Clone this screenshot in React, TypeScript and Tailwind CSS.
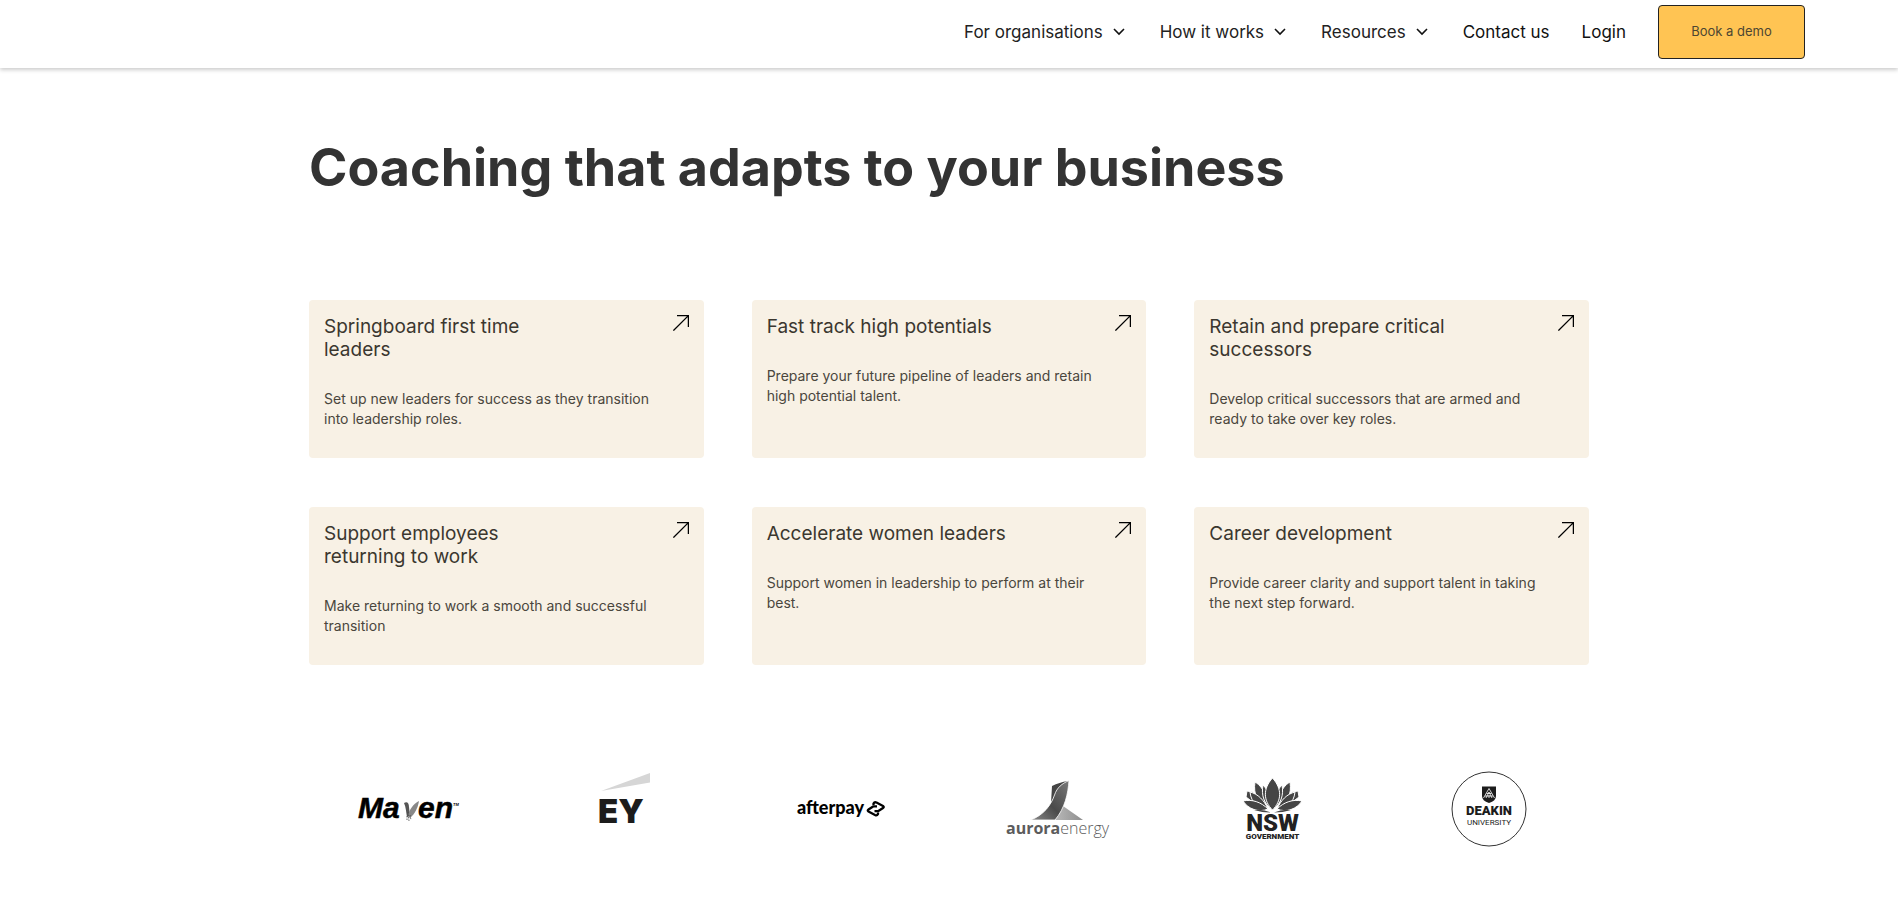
import type { ReactNode } from 'react';

const navItems = [
  { label: 'For organisations', hasMenu: true },
  { label: 'How it works', hasMenu: true },
  { label: 'Resources', hasMenu: true },
  { label: 'Contact us', hasMenu: false },
  { label: 'Login', hasMenu: false },
];

const programs = [
  {
    title: 'Springboard first time leaders',
    description: 'Set up new leaders for success as they transition into leadership roles.',
  },
  {
    title: 'Fast track high potentials',
    description: 'Prepare your future pipeline of leaders and retain high potential talent.',
  },
  {
    title: 'Retain and prepare critical successors',
    description: 'Develop critical successors that are armed and ready to take over key roles.',
  },
  {
    title: 'Support employees returning to work',
    description: 'Make returning to work a smooth and successful transition',
  },
  {
    title: 'Accelerate women leaders',
    description: 'Support women in leadership to perform at their best.',
  },
  {
    title: 'Career development',
    description: 'Provide career clarity and support talent in taking the next step forward.',
  },
];

function ChevronIcon() {
  return (
    <svg width="12" height="8" viewBox="0 0 12 8" fill="none" aria-hidden="true">
      <path d="M1 1l5 5 5-5" stroke="#111" strokeWidth="1.6" />
    </svg>
  );
}

function ArrowIcon() {
  return (
    <svg className="shrink-0" width="16" height="16" viewBox="0 0 16 16" fill="none" aria-hidden="true">
      <path d="M4 .6h11.4V12M15.4 .6L.4 15.6" stroke="#000" strokeWidth="1.3" />
    </svg>
  );
}

function MavenLogo() {
  return (
    <svg width="110" height="34" viewBox="-4 -3 110 34" role="img" aria-label="Maven">
      <g
        fontFamily="'Liberation Sans', Arial, sans-serif"
        fontWeight="700"
        fontStyle="italic"
        stroke="#000"
        strokeWidth=".5"
      >
        <text x="0" y="23" fontSize="30">Ma</text>
        <text x="60" y="23" fontSize="30">en</text>
        <text x="95" y="11" fontSize="4" stroke="none">TM</text>
      </g>
      <path d="M46 8c3-2 5 0 5 4l1 9-3 1c-1-5-1-10-3-14z" fill="#555" />
      <path d="M61 6c-1 6-4 13-9 17l-2-2c1-6 5-12 11-15z" fill="#888" />
      <path d="M50 17l1 9M52 20l1 5M49 21v4" stroke="#444" strokeWidth=".8" strokeDasharray="1.5 1" />
    </svg>
  );
}

function EyLogo() {
  return (
    <svg width="60" height="72" viewBox="-4 0 60 72" role="img" aria-label="EY">
      <path d="M2 18L51 0v9.5z" fill="#d6d6d6" />
      <text x="-1" y="50" fontFamily="Inter, sans-serif" fontWeight="900" fontSize="33" fill="#1c1c1c">
        EY
      </text>
    </svg>
  );
}

function AfterpayLogo() {
  return (
    <svg width="90" height="24" viewBox="0 0 90 24" role="img" aria-label="afterpay">
      <text x="1" y="17" fontFamily="Lato, sans-serif" fontWeight="900" fontSize="18">
        afterpay
      </text>
      <g transform="translate(70 4)" fill="none" stroke="#000" strokeWidth="2.3" strokeLinejoin="round">
        <path d="M7.5 4V2.500Q8.500 .6 10.500 1.500L17 5q1.500 1 0 2l-5 3.200H8.500" />
        <path d="M12 11.500v1.500q-1 2-3 1L2.500 10.500q-1.500-1 0-2l5-3.200H11" />
      </g>
    </svg>
  );
}

function AuroraLogo() {
  return (
    <svg width="110" height="64" viewBox="-4 -2 110 64" role="img" aria-label="aurora energy">
      <defs>
        <linearGradient id="aurora-ribbon" x1="0" y1="1" x2="1" y2="0">
          <stop offset="0" stopColor="#8a8a8a" />
          <stop offset=".45" stopColor="#4a4a4a" />
          <stop offset="1" stopColor="#7a7a7a" />
        </linearGradient>
        <linearGradient id="aurora-hill" x1="0" y1="0" x2="1" y2="0">
          <stop offset="0" stopColor="#b8b8b8" />
          <stop offset="1" stopColor="#8e8e8e" />
        </linearGradient>
      </defs>
      <path d="M57 27L77 41H49z" fill="url(#aurora-hill)" />
      <path d="M46 7C51 4.500 56 3 62 2 54 7 51 10 49 16l-4 8z" fill="#444" />
      <path
        d="M63 1.500C62 15 59 29 49 41H24.500C38 36 45 26 48.500 16 51 8.500 56 4.500 63 1.500z"
        fill="url(#aurora-ribbon)"
        stroke="#fff"
        strokeWidth=".8"
      />
      <text x="0" y="55" fontFamily="'Open Sans', sans-serif" fontSize="16" fontWeight="700" fill="#5c5c5c">
        aurora
        <tspan fontWeight="300">energy</tspan>
      </text>
    </svg>
  );
}

function NswLogo() {
  return (
    <svg width="60" height="64" viewBox="0 0 60 64" role="img" aria-label="NSW Government">
      <g fill="#454545" stroke="#fff" strokeWidth="1">
        <path d="M4 14l6 1 5 9-4 2-8-6zM55 14l-6 1-5 9 4 2 8-6z" />
        <path d="M12 5c5 3 9 8 10 14v12C15 26 10 17 12 5zM47 5c-5 3-9 8-10 14v12c7-5 12-14 10-26z" />
        <path d="M7 15c8 2 14 8 18 17-9 0-17-6-18-17zM52 15c-8 2-14 8-18 17 9 0 17-6 18-17z" />
        <path d="M0 24c9-2 18 1 25 8-9 4-20 0-25-8zM59 24c-9-2-18 1-25 8 9 4 20 0 25-8z" />
        <path d="M20 8c5 5 9 14 9.500 25C21 27 18 18 20 8zM39 8c-5 5-9 14-9.500 25C38 27 41 18 39 8z" />
        <path d="M29.500 1c10 11 9 23 0 32-9-9-10-21 0-32z" />
      </g>
      <path d="M11 33q9-1 17 2.500-9 0-17-2.500zM48 33q-9-1-17 2.500 9 0 17-2.500z" fill="#454545" />
      <text fontFamily="Roboto, sans-serif" fontWeight="900" textAnchor="middle" fill="#222">
        <tspan x="29.500" y="54" fontSize="24">NSW</tspan>
        <tspan x="29.500" y="62" fontSize="8">GOVERNMENT</tspan>
      </text>
    </svg>
  );
}

function DeakinLogo() {
  return (
    <svg width="76" height="76" viewBox="0 0 76 76" role="img" aria-label="Deakin University">
      <circle cx="38" cy="38" r="37" fill="#fff" stroke="#333" />
      <path d="M31 15.500h14V25q0 5-7 7-7-2-7-7z" fill="#1c1c1c" />
      <path d="M38 17.500L32.500 27M38 17.500l5.500 9.500M38 21l-3 6M38 21l3 6M38 24v3M34 25h8M35.500 22.500h5" stroke="#fff" strokeWidth=".8" />
      <g fontFamily="Roboto, sans-serif" textAnchor="middle" fill="#1c1c1c">
        <text x="38" y="44" fontSize="13" fontWeight="900">DEAKIN</text>
        <text x="38" y="54" fontSize="8" fontWeight="400">UNIVERSITY</text>
      </g>
    </svg>
  );
}

const logos: { name: string; logo: ReactNode }[] = [
  { name: 'maven', logo: <MavenLogo /> },
  { name: 'ey', logo: <EyLogo /> },
  { name: 'afterpay', logo: <AfterpayLogo /> },
  { name: 'aurora', logo: <AuroraLogo /> },
  { name: 'nsw', logo: <NswLogo /> },
  { name: 'deakin', logo: <DeakinLogo /> },
];

function Header() {
  return (
    <header className="bg-white pt-[5px] pb-[9px] pr-[93px] shadow-[0_2px_4px_rgba(0,0,0,0.2)]">
      <nav className="flex items-center justify-end gap-8">
        {navItems.map((item) =>
          item.hasMenu ? (
            <button
              key={item.label}
              type="button"
              className="flex items-center gap-2.5 pr-[3px] text-[17px] leading-6 text-[#222]"
            >
              {item.label}
              <ChevronIcon />
            </button>
          ) : (
            <a key={item.label} href="#" className="text-[17px] leading-6 text-[#111]">
              {item.label}
            </a>
          )
        )}
        <button
          type="button"
          className="h-[54px] w-[147px] rounded border border-[#222] bg-[#ffc453] text-[13px] text-[#4d4632]"
        >
          Book a demo
        </button>
      </nav>
    </header>
  );
}

export default function App() {
  return (
    <div className="bg-white font-['Inter',sans-serif]">
      <Header />

      <main className="mx-auto max-w-7xl pt-[68px]">
        <h1 className="text-[52px] leading-16 font-bold text-[#333]">
          Coaching that adapts to your business
        </h1>

        {/* Programs */}
        <div className="mt-[100px] grid grid-cols-3 gap-x-12 gap-y-[49px]">
          {programs.map((program) => (
            <a
              key={program.title}
              href="#"
              className="block rounded bg-[#f8f1e5] px-[15px] pt-[15px] pb-[29px]"
            >
              <div className="flex items-start justify-between">
                <h2 className="max-w-[250px] text-[19px] leading-[23px] text-[#3b372f]">
                  {program.title}
                </h2>
                <ArrowIcon />
              </div>
              <p className="mt-7 max-w-[340px] text-sm leading-5 text-[#4a463d]">
                {program.description}
              </p>
            </a>
          ))}
        </div>

        {/* Customer logos */}
        <ul className="-mx-2 mt-[104px] grid h-20 grid-cols-6 items-center">
          {logos.map(({ name, logo }) => (
            <li key={name} className="flex justify-center">
              {logo}
            </li>
          ))}
        </ul>
      </main>
    </div>
  );
}
